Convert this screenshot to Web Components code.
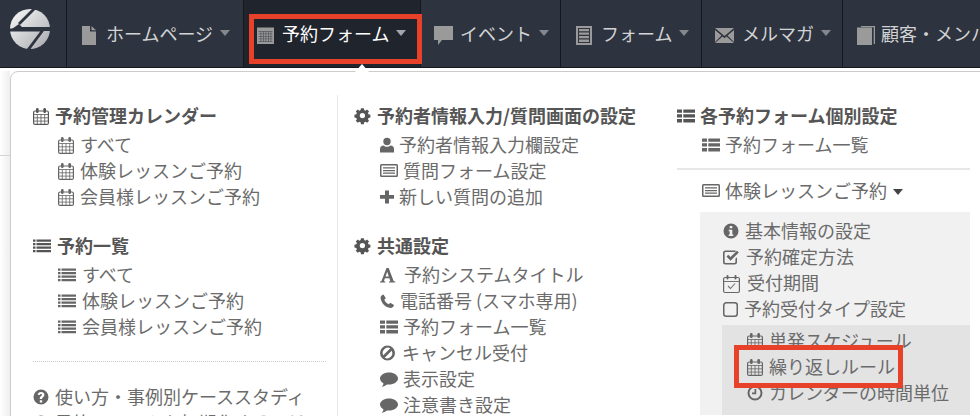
<!DOCTYPE html>
<html lang="ja">
<head>
<meta charset="utf-8">
<title>予約フォーム</title>
<style>
	html, body { margin: 0; height: 416px; overflow: hidden; background: #fff; }
	body { font-family: "Noto Sans CJK JP", "Liberation Sans", sans-serif; color: #666; }
</style>
</head>
<body>
<app-shell>
	<top-nav slot="nav">
		<nav-item icon="file" style="width:177px;--pad:15px;--w:14px;--gap:10px">ホームページ</nav-item>
		<nav-item icon="calendar-fill" active style="width:177px;--pad:13px;--w:17px;--gap:8px">予約フォーム</nav-item>
		<nav-item icon="bubble" style="width:140px;--pad:13px;--w:19px;--gap:7px">イベント</nav-item>
		<nav-item icon="sheet" style="width:141px;--pad:15px;--w:16px;--gap:9px">フォーム</nav-item>
		<nav-item icon="mail" style="width:141px;--pad:13px;--w:19px;--gap:8px">メルマガ</nav-item>
		<nav-item icon="book" style="width:180px;--pad:14px;--w:18px;--gap:6px">顧客・メンバー</nav-item>
	</top-nav>
	<menu-panel slot="panel">
		<menu-col style="width:304px">
			<menu-head icon="calendar">予約管理カレンダー</menu-head>
			<menu-link icon="calendar">すべて</menu-link>
			<menu-link icon="calendar">体験レッスンご予約</menu-link>
			<menu-link icon="calendar">会員様レッスンご予約</menu-link>
			<menu-gap></menu-gap>
			<menu-head icon="list">予約一覧</menu-head>
			<menu-link icon="list">すべて</menu-link>
			<menu-link icon="list">体験レッスンご予約</menu-link>
			<menu-link icon="list">会員様レッスンご予約</menu-link>
			<menu-rule kind="dotted"></menu-rule>
			<menu-link icon="question" flat>使い方・事例別ケーススタディ</menu-link>
			<menu-link icon="question" flat>予約システムを初期化するには</menu-link>
		</menu-col>
		<menu-col style="width:340px;margin-top:-8px;padding:8px 0 0 17px;border-left:1px solid #e8e8e8">
			<menu-head icon="cog">予約者情報入力/質問画面の設定</menu-head>
			<menu-link icon="user">予約者情報入力欄設定</menu-link>
			<menu-link icon="card">質問フォーム設定</menu-link>
			<menu-link icon="plus">新しい質問の追加</menu-link>
			<menu-gap></menu-gap>
			<menu-head icon="cog">共通設定</menu-head>
			<menu-link icon="font">予約システムタイトル</menu-link>
			<menu-link icon="phone">電話番号 (スマホ専用)</menu-link>
			<menu-link icon="th-list">予約フォーム一覧</menu-link>
			<menu-link icon="ban">キャンセル受付</menu-link>
			<menu-link icon="comment">表示設定</menu-link>
			<menu-link icon="comment">注意書き設定</menu-link>
		</menu-col>
		<menu-col style="width:293px">
			<menu-head icon="th-list">各予約フォーム個別設定</menu-head>
			<menu-link icon="th-list">予約フォーム一覧</menu-link>
			<menu-rule kind="solid"></menu-rule>
			<menu-link icon="card" caret>体験レッスンご予約</menu-link>
			<menu-group>
				<menu-link icon="info">基本情報の設定</menu-link>
				<menu-link icon="check">予約確定方法</menu-link>
				<menu-link icon="calendar-check">受付期間</menu-link>
				<menu-link icon="square">予約受付タイプ設定</menu-link>
				<menu-group inner>
					<menu-link icon="calendar">単発スケジュール</menu-link>
					<menu-link icon="calendar">繰り返しルール</menu-link>
					<menu-link icon="clock">カレンダーの時間単位</menu-link>
				</menu-group>
			</menu-group>
		</menu-col>
	</menu-panel>
	<red-box style="left:249px;top:14px;width:173px;height:50px"></red-box>
	<red-box style="left:734px;top:345px;width:169px;height:43px"></red-box>
</app-shell>

<script>
const CALENDAR_GRID = '<g fill="none" stroke="currentColor"><rect x=".6" y="3" width="14.800" height="13.400" rx="1.500" stroke-width="1.200"/><path stroke-width=".8" d="M.6 6.500h14.800M.6 9.800h14.800M.6 13.100h14.800M4.300 6.500v9.900M8 6.500v9.900M11.700 6.500v9.900"/></g><rect x="3" y="0" width="2.600" height="5" rx="1.200"/><rect x="10.400" y="0" width="2.600" height="5" rx="1.200"/>';

// [box width, art]: the box sets where the text starts, the art may run over it
const ICONS = {
	file: [14, '<path d="M0 0h8v5.500h6V19H0zM9.500 0 14 4.300H9.500z"/>'],
	'calendar-fill': [17, '<path d="M0 1.500h17V18H0z"/><path fill="#2b303a" opacity=".6" d="M1.500 5h14v.8h-14zM1.500 7.500h14v.8h-14zM1.500 10h14v.8h-14zM1.500 12.500h14v.8h-14zM1.500 15h14v.8h-14zM3.500 5h.8v11h-.8zM6 5h.8v11H6zM8.500 5h.8v11h-.8zM11 5h.8v11H11zM13.500 5h.8v11h-.8z"/>'],
	bubble: [19, '<path d="M0 0h19v14H8l-4 5v-5H0z"/>'],
	sheet: [16, '<path fill-rule="evenodd" d="M0 0h16v19H0zM2 2v15h12V2z"/><path d="M3 3h10v2.300H3zM3 6.500h10v2.300H3zM3 10h10v2.300H3zM3 13.500h10V16H3z"/>'],
	mail: [19, '<path d="M0 2h19l-9.500 8zM0 4v12l6.500-6.500zM19 4v12l-6.500-6.500zM7.500 10.500l2 1.700 2-1.700L19 17H0z"/>'],
	book: [18, '<path d="M4 0h14v18h-1.300V1.300H4z"/><path d="M0 1.500h15V19H0z"/>'],
	calendar: [16, CALENDAR_GRID],
	list: [18, '<path d="M0 1.500h2.500v2.300H0zM3.500 1.500H18v2.300H3.500zM0 5h2.500v2.300H0zM3.500 5H18v2.300H3.500zM0 8.500h2.500v2.300H0zM3.500 8.500H18v2.300H3.500zM0 12h2.500v2.300H0zM3.500 12H18v2.300H3.500z"/>'],
	'th-list': [17, '<path d="M0 1.500h5v3.300H0zM6.300 1.500H18v3.300H6.300zM0 6.300h5v3.300H0zM6.300 6.300H18v3.300H6.300zM0 11.100h5v3.300H0zM6.300 11.100H18v3.300H6.300z"/>'],
	question: [16, '<path fill-rule="evenodd" d="M8 .5a7.500 7.500 0 1 1 0 15 7.500 7.500 0 0 1 0-15zM6.800 11.200v2.200h2.400v-2.200zM8.100 3C6.100 3 4.900 4 4.700 5.800l2.200.3c.1-.8.500-1.200 1.100-1.200.6 0 1 .4 1 .9 0 .5-.3.800-.9 1.300-.8.600-1.300 1.200-1.300 2.300v.7h2.300v-.4c0-.6.300-.9.900-1.400.8-.6 1.400-1.300 1.400-2.500C11.400 4.200 10.100 3 8.100 3z"/>'],
	cog: [16, '<path fill-rule="evenodd" d="M6.300 .5h3l.4 2 1.300.6 1.700-1.200 2.100 2.100-1.200 1.700.6 1.300 2 .4v3l-2 .4-.6 1.300 1.200 1.700-2.100 2.100-1.700-1.200-1.300.6-.4 2h-3l-.4-2-1.300-.6-1.700 1.200-2.100-2.100 1.200-1.700-.6-1.300-2-.4v-3l2-.4.6-1.300-1.200-1.700 2.100-2.100 1.700 1.200 1.300-.6zM7.800 5.500a2.800 2.800 0 1 0 0 5.600 2.800 2.800 0 0 0 0-5.600z" transform="translate(0 -.3) scale(.95)"/>'],
	user: [13, '<circle cx="7" cy="4.500" r="3.700"/><path d="M0 15.500V12c0-2 1.500-3.500 3.500-3.500 1 .8 2.200 1.300 3.500 1.300s2.500-.5 3.500-1.300c2 0 3.500 1.500 3.500 3.500v3.500z"/>'],
	card: [17, '<path fill-rule="evenodd" d="M1.500 1h15A1.500 1.500 0 0 1 18 2.500v10a1.500 1.500 0 0 1-1.500 1.500h-15A1.500 1.500 0 0 1 0 12.500v-10A1.500 1.500 0 0 1 1.500 1zM1.500 2.500v10h15v-10z"/><path d="M3 4.300h12v1.300H3zM3 6.900h12v1.300H3zM3 9.500h12v1.300H3z"/>'],
	plus: [13, '<path d="M5 1.500h4v4.500h5v3.700H9v4.800H5V9.700H0V6h5z"/>'],
	font: [18, '<path d="M0 15.500v-1l1.400-.3L6.500 1h2.200l5 13.200 1.500.3v1H9v-1l1.400-.3-1-3H4.900l-1 3 1.400.3v1zM5.500 9.500h3.300L7.200 4.800z"/>'],
	phone: [14, '<path d="M3.500 1.500 5.800 5.300 4.300 6.700c.8 2 2.500 3.700 4.500 4.500l1.400-1.500 3.800 2.300c-.3 1.700-1.700 3-3.500 2.900C5.500 14.500 1 10 .6 5 .5 3.200 1.800 1.800 3.500 1.500z"/>'],
	ban: [16, '<path fill-rule="evenodd" d="M7.500 .5a7.500 7.500 0 1 1 0 15 7.500 7.500 0 0 1 0-15zM3.300 10.300 10.300 3.300a5.200 5.200 0 0 0-7 7zM11.700 5.700 4.700 12.700a5.200 5.200 0 0 0 7-7z"/>'],
	comment: [17, '<path d="M9 1.500c5 0 9 2.700 9 6s-4 6-9 6c-.7 0-1.300 0-2-.1-1.500 1.300-3.300 2-5.500 2.500 1-1 1.800-2 2-3.500C1.400 11 0 9.400 0 7.500c0-3.300 4-6 9-6z"/>'],
	info: [16, '<path fill-rule="evenodd" d="M8 .5a7.500 7.500 0 1 1 0 15 7.500 7.500 0 0 1 0-15zM6.700 3v2.300h2.600V3zM5.700 6.700v1.500h1V11.500h-1V13h4.600v-1.500h-1V6.700z"/>'],
	check: [17, '<path fill-rule="evenodd" d="M2.500 1.500h9c.6 0 1.100.1 1.600.4l-1.300 1.300c-.1 0-.2-.1-.3-.1h-9c-.5 0-.9.400-.9.900v9c0 .5.400.9.900.9h9c.5 0 .9-.4.900-.9V9.800l1.600-1.600V13a2.500 2.500 0 0 1-2.500 2.500h-9A2.500 2.500 0 0 1 0 13V4a2.500 2.500 0 0 1 2.500-2.500z"/><path d="M3.500 7.500 5.300 5.800 7.500 8.100 14 1.700l1.800 1.800-8.300 8.200z"/>'],
	'calendar-check': [18, '<g fill="none" stroke="currentColor"><rect x=".6" y="2.500" width="15.800" height="15" rx="1.500" stroke-width="1.200"/><path stroke-width="1.100" d="M5 11l2.500 2.500 4.500-5M.6 6.500h15.800" stroke-opacity=".9"/></g><rect x="3.500" y="0" width="2" height="4.500" rx="1"/><rect x="11.500" y="0" width="2" height="4.500" rx="1"/>'],
	square: [15, '<rect x=".75" y="1.750" width="13.500" height="13.500" rx="2.500" fill="none" stroke="currentColor" stroke-width="1.500"/>'],
	clock: [16, '<path fill-rule="evenodd" d="M8 .5a7.500 7.500 0 1 1 0 15 7.500 7.500 0 0 1 0-15zM8 2.500a5.500 5.500 0 1 0 0 11 5.500 5.500 0 0 0 0-11z"/><path d="M7.500 4h1.700v5.200H5V7.500h2.500z"/>']
};

function iconSvg(name, top) {
	const [width, art] = ICONS[name];
	return `<svg width="${width}" height="18" viewBox="0 ${top} ${width} 18">${art}</svg>`;
}

class AppShell extends HTMLElement {
	constructor() {
		super();
		this.attachShadow({mode:'open'}).innerHTML = `
		<style>
			:host { display: block; position: relative; width: 980px; height: 416px; overflow: hidden; background: #fff; }
			.edge { position: absolute; left: 0; top: 71px; width: 10px; bottom: 0; background: linear-gradient(90deg, #fff, #eee); }
			.side { position: absolute; left: 0; top: 155px; width: 10px; height: 1px; background: #d4d4d4; }
		</style>
		<slot name="nav"></slot>
		<div class="edge"></div>
		<div class="side"></div>
		<slot name="panel"></slot>
		<slot></slot>`;
	}
}

class TopNav extends HTMLElement {
	constructor() {
		super();
		this.attachShadow({mode:'open'}).innerHTML = `
		<style>
			:host { display: flex; height: 67px; background: #2e343f; border-bottom: 1px solid #14171c; }
			.logo { flex: none; box-sizing: border-box; width: 67px; height: 67px; padding: 9px 0 0 10px; border-right: 1px solid #14171c; }
			svg { display: block; }
		</style>
		<div class="logo">
			<svg width="40" height="40" viewBox="0 0 40 40">
				<defs>
					<linearGradient id="g" x1="0" y1="0" x2="1" y2="1"><stop offset="0" stop-color="#fafafa"/><stop offset="1" stop-color="#a6a8ac"/></linearGradient>
				</defs>
				<circle cx="20" cy="20" r="20" fill="url(#g)"/>
				<g fill="none" stroke="#2e343f" stroke-width="2.800">
					<path d="M25 -1 9 15"/>
					<path d="M-1 21H33L18 41"/>
				</g>
				<path fill="#2e343f" d="M9 15 12 18H42V22H-1z"/>
			</svg>
		</div>
		<slot></slot>`;
	}
}

class NavItem extends HTMLElement {
	constructor() {
		super();
		const [width, art] = ICONS[this.getAttribute('icon')];
		this.attachShadow({mode:'open'}).innerHTML = `
		<style>
			:host { display: flex; flex: none; align-items: center; box-sizing: border-box; padding: 0 0 2px var(--pad); height: 67px; border-right: 1px solid #14171c; color: #d2d3d5; font-size: 18px; white-space: nowrap; }
			:host([active]) { background: #20242d; color: #fff; }
			svg { flex: none; width: var(--w); height: 19px; margin: 5px var(--gap) 0 0; fill: #9a9a9a; overflow: visible; }
			.caret { width: 0; height: 0; margin-left: 7px; border: 5.500px solid transparent; border-top: 6px solid #85878c; border-bottom: 0; }
			:host([active]) .caret { border-top-color: #a5a6a9; }
			.pointer { display: none; position: absolute; left: 355px; top: 64px; width: 0; height: 0; border: 7px solid transparent; border-bottom: 8px solid #fff; border-top: 0; z-index: 3; }
			:host([active]) .pointer { display: block; }
		</style>
		<svg viewBox="0 0 ${width} 19">${art}</svg>
		<span><slot></slot></span>
		<span class="caret"></span>
		<span class="pointer"></span>`;
	}
}

class MenuPanel extends HTMLElement {
	constructor() {
		super();
		this.attachShadow({mode:'open'}).innerHTML = `
		<style>
			:host { display: flex; position: relative; z-index: 2; box-sizing: border-box; margin: 3px 0 0 10px; width: 980px; height: 360px; padding: 31px 0 0 22px; background: #fff; border: 1px solid #ccc; border-radius: 8px 0 0 0; }
		</style>
		<slot></slot>`;
	}
}

class MenuCol extends HTMLElement {
	constructor() {
		super();
		this.attachShadow({mode:'open'}).innerHTML = `
		<style>
			:host { display: block; flex: none; box-sizing: border-box; }
		</style>
		<slot></slot>`;
	}
}

class MenuHead extends HTMLElement {
	constructor() {
		super();
		this.attachShadow({mode:'open'}).innerHTML = `
		<style>
			:host { display: flex; align-items: center; gap: 6px; height: 26px; margin-bottom: 3px; font-size: 18px; font-weight: 700; color: #555; white-space: nowrap; }
			svg { flex: none; fill: #555; color: #555; overflow: visible; }
			span { margin-bottom: 2px; }
		</style>
		${iconSvg(this.getAttribute('icon'), -1)}
		<span><slot></slot></span>`;
	}
}

class MenuLink extends HTMLElement {
	constructor() {
		super();
		const caret = this.hasAttribute('caret') ? '<span class="caret"></span>' : '';
		this.attachShadow({mode:'open'}).innerHTML = `
		<style>
			:host { display: flex; align-items: center; gap: 6px; height: 26px; padding-left: var(--link-pad, 25px); font-size: 18px; color: #6b6b6b; white-space: nowrap; }
			:host([flat]) { padding-left: 0; }
			svg { flex: none; fill: #666; color: #666; overflow: visible; }
			span { margin-bottom: 2px; }
			.caret { width: 0; height: 0; border: 5.500px solid transparent; border-top: 6px solid #444; border-bottom: 0; margin: 2px 0 0; }
		</style>
		${iconSvg(this.getAttribute('icon'), -1)}
		<span><slot></slot></span>${caret}`;
	}
}

class MenuGap extends HTMLElement {
	constructor() {
		super();
		this.attachShadow({mode:'open'}).innerHTML = `<style>:host { display: block; height: 23px; }</style>`;
	}
}

class MenuRule extends HTMLElement {
	constructor() {
		super();
		this.attachShadow({mode:'open'}).innerHTML = `
		<style>
			:host([kind="dotted"]) { display: block; margin: 21px 11px 22px 0; border-top: 1px dotted #ccc; }
			:host([kind="solid"]) { display: block; margin: 10px 0 8px; border-top: 2px solid #e7e7e7; }
		</style>`;
	}
}

class MenuGroup extends HTMLElement {
	constructor() {
		super();
		this.attachShadow({mode:'open'}).innerHTML = `
		<style>
			:host { display: block; --link-pad: 23px; margin: 8px 0 0 23px; padding: 6px 0 0 0; background: #f1f1f1; }
			:host([inner]) { --link-pad: 25px; margin: 3px 0 0 22px; padding: 3px 0 9px 0; background: #e3e3e3; }
		</style>
		<slot></slot>`;
	}
}

class RedBox extends HTMLElement {
	constructor() {
		super();
		this.attachShadow({mode:'open'}).innerHTML = `
		<style>
			:host { display: block; position: absolute; box-sizing: border-box; border: 5px solid #e8412a; z-index: 5; }
		</style>`;
	}
}

customElements.define('app-shell', AppShell);
customElements.define('top-nav', TopNav);
customElements.define('nav-item', NavItem);
customElements.define('menu-panel', MenuPanel);
customElements.define('menu-col', MenuCol);
customElements.define('menu-head', MenuHead);
customElements.define('menu-link', MenuLink);
customElements.define('menu-gap', MenuGap);
customElements.define('menu-rule', MenuRule);
customElements.define('menu-group', MenuGroup);
customElements.define('red-box', RedBox);
</script>
</body>
</html>
